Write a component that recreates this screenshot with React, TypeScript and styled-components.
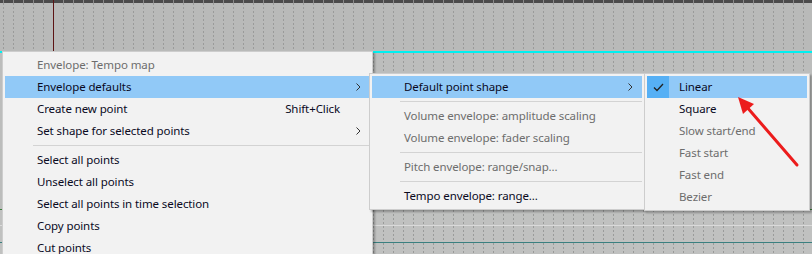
import { createGlobalStyle } from 'styled-components'
import styled from 'styled-components'

const GlobalStyle = createGlobalStyle`
  html, body {
    margin: 0;
    padding: 0;
    background: #b9bab9;
  }
  body {
    font-family: "Noto Sans", "Open Sans", sans-serif;
  }
`

const Page = styled.div`
  position: relative;
  width: 812px;
  height: 254px;
  overflow: hidden;
  display: flex;
  flex-direction: column;
`

const Ruler = styled.div`
  height: 3px;
  flex: none;
  background:
    repeating-linear-gradient(to right, transparent 0 3px, #8a8a8a 3px 4px, transparent 4px 10px),
    #4b4b4b;
`

const Track = styled.div<{ $height?: number; $bg?: string }>`
  flex: ${(p) => (p.$height ? 'none' : '1')};
  height: ${(p) => (p.$height ? `${p.$height}px` : 'auto')};
  background:
    repeating-linear-gradient(to bottom, transparent 0 2px, ${(p) => p.$bg || '#b9bab9'} 2px 4px),
    repeating-linear-gradient(to right, transparent 0 3px, #9a9b9a 3px 4px, transparent 4px 10px),
    ${(p) => p.$bg || '#b9bab9'};
`

const HLine = styled.div<{ $color: string; $size?: number }>`
  flex: none;
  height: ${(p) => p.$size || 1}px;
  background: ${(p) => p.$color};
`

const Cursor = styled.div`
  position: absolute;
  left: 53px;
  top: 0;
  width: 1px;
  height: 51px;
  background: #5c1414;
`

const Menu = styled.div<{ $left: number; $top: number; $width: number }>`
  position: absolute;
  left: ${(p) => p.$left}px;
  top: ${(p) => p.$top}px;
  width: ${(p) => p.$width}px;
  box-sizing: border-box;
  padding: 2px;
  background: #f2f2f2;
  border: 1px solid #cdcdcd;
  box-shadow: 2px 2px 2px rgba(0, 0, 0, 0.28);
  font-family: "Noto Sans", "Open Sans", sans-serif;
  font-size: 11.5px;
  letter-spacing: -0.1px;
`

const Item = styled.div<{ $active?: boolean; $disabled?: boolean }>`
  display: flex;
  align-items: center;
  height: 22px;
  line-height: 22px;
  white-space: nowrap;
  background: ${(p) => (p.$active ? '#91c9f7' : 'transparent')};
  color: ${(p) => (p.$disabled ? '#6d6d6d' : '#0a0a1e')};
`

const CheckCell = styled.span<{ $on?: boolean }>`
  flex: none;
  width: 22px;
  height: 22px;
  margin-right: 10px;
  display: flex;
  align-items: center;
  justify-content: center;
  background: ${(p) => (p.$on ? '#56b0f5' : 'transparent')};
`

const Label = styled.span`
  flex: 1;
`

const Shortcut = styled.span`
  margin-right: 16px;
`

const ArrowCell = styled.span`
  flex: none;
  width: 14px;
  display: flex;
  align-items: center;
`

const Separator = styled.div`
  height: 7px;
  display: flex;
  align-items: center;
  padding-left: 28px;

  &::after {
    content: '';
    flex: 1;
    height: 1px;
    background: #d3d3d3;
  }
`

const Pointer = styled.svg`
  position: absolute;
  left: 730px;
  top: 90px;
`

type Entry =
  | { sep: true }
  | { sep?: false; label: string; disabled?: boolean; active?: boolean; shortcut?: string; sub?: boolean; checked?: boolean }

const mainItems: Entry[] = [
  { label: 'Envelope: Tempo map', disabled: true },
  { label: 'Envelope defaults', active: true, sub: true },
  { label: 'Create new point', shortcut: 'Shift+Click' },
  { label: 'Set shape for selected points', sub: true },
  { sep: true },
  { label: 'Select all points' },
  { label: 'Unselect all points' },
  { label: 'Select all points in time selection' },
  { label: 'Copy points' },
  { label: 'Cut points' },
]

const defaultsItems: Entry[] = [
  { label: 'Default point shape', active: true, sub: true },
  { sep: true },
  { label: 'Volume envelope: amplitude scaling', disabled: true },
  { label: 'Volume envelope: fader scaling', disabled: true },
  { sep: true },
  { label: 'Pitch envelope: range/snap...', disabled: true },
  { sep: true },
  { label: 'Tempo envelope: range...' },
]

const shapeItems: Entry[] = [
  { label: 'Linear', active: true, checked: true },
  { label: 'Square' },
  { label: 'Slow start/end', disabled: true },
  { label: 'Fast start', disabled: true },
  { label: 'Fast end', disabled: true },
  { label: 'Bezier', disabled: true },
]

function Chevron() {
  return (
    <svg width="5" height="8" viewBox="0 0 5 8">
      <path d="M0.5 0.5 L4 4 L0.5 7.5" fill="none" stroke="#333" strokeWidth="1" />
    </svg>
  )
}

function Check() {
  return (
    <svg width="11" height="9" viewBox="0 0 11 9">
      <path d="M1 4.5 L4 7.5 L10 1" fill="none" stroke="#222" strokeWidth="1.3" />
    </svg>
  )
}

function MenuList({ items, checks }: { items: Entry[]; checks?: boolean }) {
  return (
    <>
      {items.map((it, i) =>
        it.sep ? (
          <Separator key={i} />
        ) : (
          <Item key={i} $active={it.active} $disabled={it.disabled}>
            <CheckCell $on={checks && it.checked}>{it.checked && <Check />}</CheckCell>
            <Label>{it.label}</Label>
            {it.shortcut && <Shortcut>{it.shortcut}</Shortcut>}
            <ArrowCell>{it.sub && <Chevron />}</ArrowCell>
          </Item>
        )
      )}
    </>
  )
}

export default function App() {
  return (
    <>
      <GlobalStyle />
      <Page>
        <Ruler />
        <Track $height={48} />
        <HLine $color="#00f0f0" $size={2} />
        <Track $height={156} $bg="#bcbdbc" />
        <HLine $color="#3b7f3b" />
        <Track $height={15} $bg="#c0c1c0" />
        <HLine $color="#dadada" />
        <Track $height={16} $bg="#c0c1c0" />
        <HLine $color="#3a8080" />
        <Track $bg="#c0c1c0" />

        <Cursor />

        <Menu $left={2} $top={51} $width={371}>
          <MenuList items={mainItems} />
        </Menu>
        <Menu $left={369} $top={73} $width={276}>
          <MenuList items={defaultsItems} />
        </Menu>
        <Menu $left={644} $top={73} $width={166}>
          <MenuList items={shapeItems} checks />
        </Menu>

        <Pointer width="72" height="80" viewBox="0 0 72 80">
          <line x1="67" y1="75" x2="16" y2="16" stroke="#ec1c1c" strokeWidth="3" strokeLinecap="round" />
          <polygon points="8,7 24,14 13,24" fill="#ec1c1c" />
        </Pointer>
      </Page>
    </>
  )
}
